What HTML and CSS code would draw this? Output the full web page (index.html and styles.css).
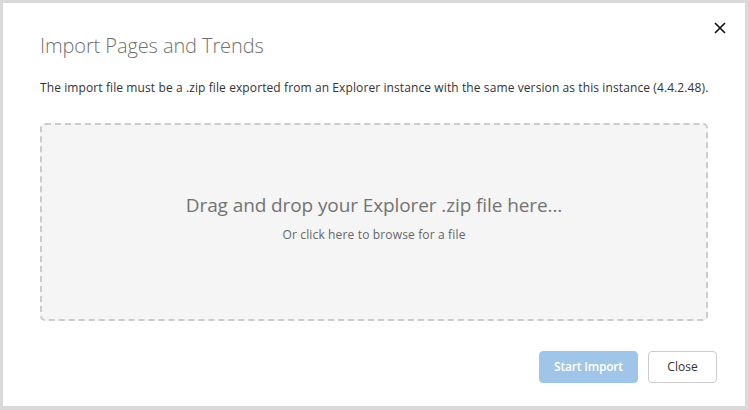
FILE: index.html
```html
<!DOCTYPE html>
<html lang="en">
<head>
<meta charset="utf-8">
<title>Import Pages and Trends</title>
<link rel="stylesheet" href="styles.css">
</head>
<body>
<div class="dialog">
  <div class="header">
    <h1 class="title">Import Pages and Trends</h1>
    <button class="close-x" aria-label="Close">
      <svg width="12" height="12" viewBox="0 0 12 12"><path d="M1 1 L11 11 M11 1 L1 11" stroke="#111" stroke-width="1.6" fill="none"/></svg>
    </button>
  </div>
  <p class="desc">The import file must be a .zip file exported from an Explorer instance with the same version as this instance (4.4.2.48).</p>
  <div class="dropzone">
    <div class="drop-main">Drag and drop your Explorer .zip file here...</div>
    <div class="drop-sub">Or click here to browse for a file</div>
  </div>
  <div class="footer">
    <button class="btn btn-primary" disabled>Start Import</button>
    <button class="btn btn-default">Close</button>
  </div>
</div>
</body>
</html>
```
FILE: styles.css
```css
html, body {
  margin: 0;
  padding: 0;
}
body {
  background: #d9d9d9;
  font-family: "Open Sans", "Noto Sans", sans-serif;
  width: 749px;
  height: 410px;
  overflow: hidden;
}
.dialog {
  margin: 3px 4px 4px 3px;
  height: 403px;
  background: #ffffff;
  box-sizing: border-box;
  padding: 29px 37px 0 37px;
  display: flex;
  flex-direction: column;
}
.header {
  display: flex;
  align-items: center;
  justify-content: space-between;
  height: 28px;
}
.title {
  margin: 0;
  font-size: 20px;
  font-weight: 300;
  line-height: 28px;
  color: #707070;
  letter-spacing: -0.1px;
}
.close-x {
  border: 0;
  background: none;
  padding: 0;
  margin-right: -18px;
  margin-top: -36px;
  width: 12px;
  height: 12px;
  display: flex;
}
.desc {
  margin: 19px 0 0 0;
  font-size: 12px;
  line-height: 18px;
  color: #333;
  white-space: nowrap;
  letter-spacing: 0.1px;
}
.dropzone {
  margin-top: 26px;
  height: 198px;
  box-sizing: border-box;
  border: 2px dashed #cccccc;
  border-radius: 5px;
  background: #f5f5f5;
  padding-top: 66px;
  display: flex;
  flex-direction: column;
  align-items: center;
  text-align: center;
}
.drop-main {
  font-size: 19px;
  line-height: 28px;
  color: #737373;
  letter-spacing: -0.1px;
}
.drop-sub {
  margin-top: 7px;
  font-size: 12px;
  line-height: 18px;
  color: #666;
  letter-spacing: 0.15px;
}
.footer {
  margin-top: 30px;
  margin-right: -9px;
  display: flex;
  justify-content: flex-end;
  gap: 10px;
}
.btn {
  height: 32px;
  box-sizing: border-box;
  border-radius: 4px;
  font-family: inherit;
  font-size: 12px;
  padding: 0;
  line-height: 30px;
  white-space: nowrap;
}
.btn-primary {
  width: 99px;
  background: #9fc5e8;
  border: 1px solid #9fc5e8;
  color: #ffffff;
  font-weight: 600;
  letter-spacing: -0.2px;
}
.btn-default {
  width: 69px;
  background: #ffffff;
  border: 1px solid #cccccc;
  color: #333333;
}
```
